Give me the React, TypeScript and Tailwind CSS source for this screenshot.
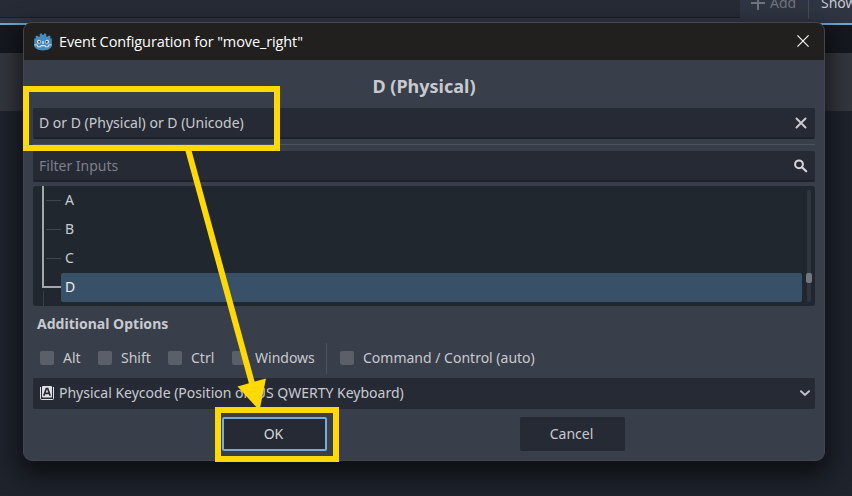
import React from 'react';

const KEYS = ['A', 'B', 'C', 'D'];

function GodotIcon() {
  return (
    <svg className="block" width="18" height="18" viewBox="0 0 18 18">
      <path
        d="M1.400 3.600 3 2.500l1.900 1.300 1-.4L5.600 1 7.600.3l1 1.800h.8l1-1.800 2 .7-.3 2.400 1 .4L15 2.500l1.600 1.100-.5 2h1.700v7c0 3-4 4.900-8.800 4.900S.200 15.600.200 12.600v-7h1.700z"
        fill="#478cbf"
      />
      <path
        d="M.3 11.700l2.900.3.600 1.600 2.600.2.700-1.200h3.800l.7 1.200 2.600-.2.600-1.600 2.900-.3"
        fill="none"
        stroke="#d3e3ef"
        strokeWidth="1.100"
        strokeLinejoin="round"
      />
      <circle cx="4.900" cy="8.700" r="1.900" fill="#e8f1f7" />
      <circle cx="13.100" cy="8.700" r="1.900" fill="#e8f1f7" />
      <circle cx="5.200" cy="8.800" r="1.100" fill="#414042" />
      <circle cx="12.800" cy="8.800" r="1.100" fill="#414042" />
      <path d="M9 8.600v1.900" stroke="#e8f1f7" strokeWidth="1.200" strokeLinecap="round" />
    </svg>
  );
}

function Backdrop() {
  return (
    <div className="absolute inset-0 flex flex-col bg-[#1e232c]">
      <div className="flex h-[23px] shrink-0 bg-[#2f3542]">
        <div className="h-[18px] w-[740px] shrink-0 border-b border-[#1a1e25] bg-[#262b35]" />
        <div className="flex h-[19px] flex-1 overflow-hidden leading-[19px]">
          <svg className="ml-[11px] mt-[-4px] shrink-0" width="14" height="14" viewBox="0 0 14 14">
            <path d="M7 0v14M0 7h14" stroke="#70747d" strokeWidth="2" />
          </svg>
          <span className="-mt-[7px] ml-[5px] w-[38px] shrink-0 text-[#70747d]">Add</span>
          <span className="h-[19px] w-px shrink-0 bg-[#484d57]" />
          <span className="-mt-[7px] ml-[12px] shrink-0 text-[#c8cacf]">Show</span>
        </div>
      </div>
      <div className="h-[2px] shrink-0 bg-[#70a4cf]" />
      <div className="h-[28px] shrink-0 bg-[#15181f]" />
      <div className="h-[58px] shrink-0 bg-[#33363d]" />
    </div>
  );
}

function Check({ label, className }: { label: string; className: string }) {
  return (
    <div className={`flex h-[30px] shrink-0 items-center ${className}`}>
      <span className="mr-[9px] h-[14px] w-[14px] rounded-[2px] bg-[#5a5f6a]" />
      <span className="whitespace-nowrap">{label}</span>
    </div>
  );
}

function KeyList() {
  return (
    <div className="relative mt-[4px] flex h-[120px] shrink-0 rounded-[3px] bg-[#21272e]">
      <div className="flex w-[28px] flex-col items-end">
        <div className="h-[102px] w-[19px] border-b-2 border-l-2 border-[#a4a7aa]" />
        <div className="mt-[3px] h-[15px] w-[18px] border-l border-[#3b4047]" />
      </div>
      <div className="-ml-[15px] flex w-[756px] flex-col">
        {KEYS.map((key) => (
          <div
            key={key}
            className={
              key === 'D'
                ? 'ml-[15px] flex h-[29px] items-center rounded-[2px] bg-[#395168] pb-px pl-[4px] text-[#eceef0]'
                : 'flex h-[29px] items-center pb-px'
            }
          >
            {key !== 'D' && <span className="mr-[4px] h-px w-[15px] bg-[#41464d]" />}
            {key}
          </div>
        ))}
      </div>
      <div className="relative ml-[5px] mt-[4px] h-[112px] w-[4px] rounded-sm bg-[#31353c]">
        <div className="absolute -left-px top-[83px] h-[10px] w-[6px] rounded-[2px] bg-[#74777b]" />
      </div>
    </div>
  );
}

export default function App() {
  return (
    <div className="relative h-[496px] w-[852px] overflow-hidden font-['Noto_Sans',sans-serif] text-[14px] leading-[20px] text-[#c8cacf]">
      <Backdrop />

      <div className="absolute left-[23px] top-[22px] flex h-[439px] w-[802px] flex-col overflow-hidden rounded-[9px] border border-[#44474a] bg-[#383e4a] shadow-[0_10px_24px_4px_rgba(0,0,0,0.6)]">
        <div className="flex h-[37px] shrink-0 items-center bg-[#21201e] pl-[10px] pr-[15px]">
          <GodotIcon />
          <span className="ml-[7px] flex-1 font-['Open_Sans','Noto_Sans',sans-serif] text-[14.500px] tracking-[-0.110px] text-white">
            Event Configuration for "move_right"
          </span>
          <svg className="-mt-px" width="12" height="12" viewBox="0 0 12 12">
            <path d="M.4.4l11.200 11.200M11.600.4.4 11.600" stroke="#f4f4f4" strokeWidth="1.200" />
          </svg>
        </div>

        <div className="flex flex-1 flex-col px-[9px]">
          <h1 className="mt-[14px] h-[34px] text-center text-[18px] font-bold leading-[24px]">D (Physical)</h1>

          <div className="flex h-[31px] shrink-0 items-center rounded-[2px] border-b-2 border-[#1d2129] bg-[#262a34] pl-[6px] pr-[8px]">
            <span className="flex-1">D or D (Physical) or D (Unicode)</span>
            <svg width="12" height="12" viewBox="0 0 12 12">
              <path d="M1.500 1.500l9 9M10.500 1.500l-9 9" stroke="#c8cacf" strokeWidth="2" strokeLinecap="round" />
            </svg>
          </div>

          <div className="mt-[5px] h-px shrink-0 bg-[#4b5261]" />

          <div className="mt-[6px] flex h-[31px] shrink-0 items-center rounded-[2px] border-b-2 border-[#1d2129] bg-[#262a34] pl-[6px] pr-[7px]">
            <span className="flex-1 text-[#7c8089]">Filter Inputs</span>
            <svg width="14" height="14" viewBox="0 0 14 14" fill="none" stroke="#d3d5d9">
              <circle cx="5" cy="5.300" r="3.900" strokeWidth="2" />
              <path d="M8 8.300l4.200 4" strokeWidth="2.200" strokeLinecap="round" />
            </svg>
          </div>

          <KeyList />

          <h2 className="ml-[4px] mt-[8px] h-[20px] shrink-0 font-bold tracking-[0.020px]">Additional Options</h2>

          <div className="mt-[9px] flex h-[31px] shrink-0">
            <Check label="Alt" className="ml-[7px] w-[58px]" />
            <Check label="Shift" className="w-[70px]" />
            <Check label="Ctrl" className="w-[64px]" />
            <Check label="Windows" className="w-[94px]" />
            <span className="mr-[13px] h-[31px] w-px shrink-0 bg-[#4b5261]" />
            <Check label="Command / Control (auto)" className="" />
          </div>

          <div className="mt-[4px] flex h-[31px] shrink-0 items-center rounded-[2px] bg-[#262a34] pb-px pl-[7px] pr-[5px]">
            <svg width="14" height="14" viewBox="0 0 14 14">
              <path d="M.5 1v11.500a1 1 0 0 0 1 1h11a1 1 0 0 0 1-1V1" fill="none" stroke="#e0e1e3" />
              <rect x="2" y="0" width="10" height="11.500" rx="1" fill="#e0e1e3" />
              <path d="M3.800 9.700 6.300 2.500h1.400l2.500 7.200M5 7.400h4" fill="none" stroke="#262a34" strokeWidth="1.700" />
            </svg>
            <span className="ml-[5px] flex-1">Physical Keycode (Position on US QWERTY Keyboard)</span>
            <svg width="10" height="7" viewBox="0 0 10 7">
              <path d="M1 1.300l4 3.700 4-3.700" fill="none" stroke="#bfc1c6" strokeWidth="2" strokeLinecap="round" />
            </svg>
          </div>

          <div className="mt-[8px] flex shrink-0">
            <button className="ml-[189px] h-[34px] w-[105px] rounded-[2px] border-2 border-[#78addb] bg-[#262a34] pr-[2px] text-[#d5d7da]">
              OK
            </button>
            <button className="ml-[193px] h-[34px] w-[105px] rounded-[2px] bg-[#262a34] pr-[2px]">Cancel</button>
          </div>
        </div>
      </div>

      <div className="absolute left-[23px] top-[86px] h-[65px] w-[257px] border-[6px] border-[#ffd905]" />
      <div className="absolute left-[215px] top-[407px] h-[55px] w-[124px] border-[6px] border-[#ffd905]" />
      <svg className="absolute inset-0" width="852" height="496" viewBox="0 0 852 496">
        <path d="M188 149l65 238" stroke="#ffd905" strokeWidth="6" />
        <path d="M237.500 386.500l28.500-8-6.500 32z" fill="#ffd905" />
      </svg>
    </div>
  );
}
